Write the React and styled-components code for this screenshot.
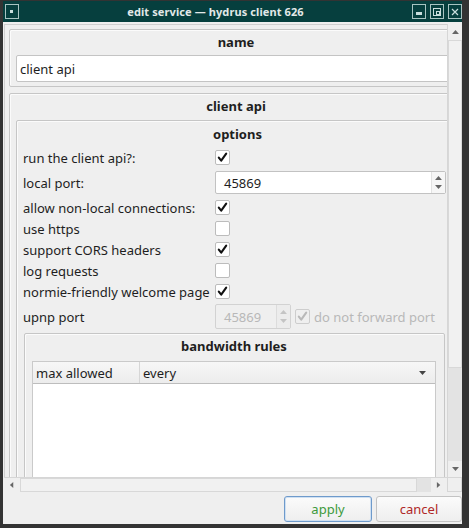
import React from "react";
import styled, { createGlobalStyle } from "styled-components";

const GlobalStyle = createGlobalStyle`
  html, body {
    margin: 0;
    padding: 0;
    background: #2e2e2e;
  }
  * {
    box-sizing: border-box;
  }
`;

const Frame = styled.div`
  width: 469px;
  height: 528px;
  background: #333333;
  padding: 1px 7px 4px 3px;
  display: flex;
  flex-direction: column;
  font-family: "Noto Sans", "DejaVu Sans", sans-serif;
  font-size: 13px;
  color: #1e1e1e;
`;

const TitleBar = styled.div`
  height: 21px;
  flex: none;
  background: #063f3e;
  display: flex;
  align-items: center;
  padding: 0 0 0 2px;
`;

const TitleText = styled.div`
  flex: 1;
  text-align: center;
  color: #e2e8e8;
  font-weight: 700;
  font-size: 11px;
  letter-spacing: 0.1px;
`;

const TitleButtons = styled.div`
  display: flex;
  gap: 4px;
`;

const WinButton = styled.div`
  width: 14px;
  height: 15px;
  border: 1px solid #a8c4c2;
  display: flex;
  align-items: center;
  justify-content: center;
`;

const Body = styled.div`
  flex: 1;
  background: #efefef;
  display: flex;
  flex-direction: column;
  padding: 2px 0 2px 1px;
  min-height: 0;
`;

const ScrollArea = styled.div`
  flex: 1;
  display: grid;
  grid-template-columns: 1fr 15px;
  grid-template-rows: 1fr 15px;
  min-height: 0;
`;

const Viewport = styled.div`
  overflow: hidden;
  border-top: 1px solid #cfcfcf;
  border-left: 1px solid #cfcfcf;
  padding: 4px 0 0 4px;
`;

const Content = styled.div`
  width: 454px;
  display: flex;
  flex-direction: column;
  gap: 6px;
`;

const Group = styled.div`
  border: 1px solid #c6c6c6;
  box-shadow: inset 1px 1px 0 #fbfbfb;
  border-radius: 2px;
  padding: ${(p) => p.$pad || "3px 6px 4px 6px"};
  display: flex;
  flex-direction: column;
  margin: ${(p) => p.$margin || "0"};
`;

const GroupTitle = styled.div`
  font-weight: 700;
  text-align: center;
  line-height: 18px;
  margin-bottom: ${(p) => p.$gap || 4}px;
`;

const TextInput = styled.div`
  height: 27px;
  background: #ffffff;
  border: 1px solid #c4c4c4;
  border-radius: 2px;
  display: flex;
  align-items: center;
  padding-left: 3px;
`;

const OptionsGrid = styled.div`
  display: grid;
  grid-template-columns: 192px 1fr;
  row-gap: 4px;
  padding-right: 6px;
`;

const Label = styled.div`
  height: ${(p) => (p.$tall ? 25 : 17)}px;
  display: flex;
  align-items: center;
  white-space: nowrap;
`;

const Control = styled.div`
  height: ${(p) => (p.$tall ? 25 : 17)}px;
  display: flex;
  align-items: center;
  gap: 4px;
`;

const Box = styled.div`
  width: 15px;
  height: 15px;
  flex: none;
  background: ${(p) => (p.$disabled ? "#efefef" : "#ffffff")};
  border: 1px solid ${(p) => (p.$disabled ? "#cdcdcd" : "#bcbcbc")};
  border-radius: 2px;
  display: flex;
  align-items: center;
  justify-content: center;
`;

const Spin = styled.div`
  height: ${(p) => p.$h || 23}px;
  width: ${(p) => p.$w || "100%"};
  flex: none;
  background: ${(p) => (p.$disabled ? "#efefef" : "#ffffff")};
  border: 1px solid ${(p) => (p.$disabled ? "#d2d2d2" : "#c2c2c2")};
  border-radius: 2px;
  display: flex;
  color: ${(p) => (p.$disabled ? "#b8b8b8" : "#1e1e1e")};
`;

const SpinValue = styled.div`
  flex: 1;
  display: flex;
  align-items: center;
  padding-left: 8px;
`;

const SpinArrows = styled.div`
  width: 14px;
  border-left: 1px solid ${(p) => (p.$disabled ? "#dcdcdc" : "#e2e2e2")};
  background: ${(p) => (p.$disabled ? "#ececec" : "#f6f6f6")};
  display: flex;
  flex-direction: column;
  align-items: center;
  justify-content: center;
  gap: 3px;
`;

const DisabledText = styled.span`
  color: #b8b8b8;
  white-space: nowrap;
`;

const List = styled.div`
  flex: 1;
  background: #ffffff;
  border: 1px solid #cacaca;
  border-bottom: none;
  min-height: 140px;
`;

const ListHeader = styled.div`
  height: 22px;
  display: flex;
  background: linear-gradient(#f7f7f7, #ececec);
  border-bottom: 1px solid #bdbdbd;
`;

const HeaderCell = styled.div`
  width: ${(p) => p.$w || "auto"};
  flex: ${(p) => (p.$w ? "none" : 1)};
  display: flex;
  align-items: center;
  justify-content: space-between;
  padding: 0 9px 0 3px;
  border-right: ${(p) => (p.$w ? "1px solid #d6d6d6" : "none")};
`;

const VScroll = styled.div`
  display: flex;
  flex-direction: column;
  border-left: 1px solid #d6d6d6;
  background: #e3e3e3;
`;

const HScroll = styled.div`
  display: flex;
  border-top: 1px solid #d6d6d6;
  background: #e3e3e3;
`;

const Arrow = styled.div`
  flex: none;
  width: ${(p) => (p.$horizontal ? "16px" : "auto")};
  height: ${(p) => (p.$horizontal ? "auto" : "16px")};
  background: #efefef;
  display: flex;
  align-items: center;
  justify-content: center;
`;

const Handle = styled.div`
  flex: ${(p) => p.$size} 0 0;
  background: #f1f1f1;
  border: 1px solid #d8d8d8;
`;

const Trough = styled.div`
  flex: ${(p) => p.$size} 0 0;
`;

const Corner = styled.div`
  background: #efefef;
  border: 1px solid #d6d6d6;
`;

const ButtonRow = styled.div`
  flex: none;
  display: flex;
  justify-content: flex-end;
  gap: 4px;
  margin-top: 4px;
`;

const DialogButton = styled.button`
  width: ${(p) => p.$w}px;
  height: 26px;
  font-family: "Noto Sans", "DejaVu Sans", sans-serif;
  font-size: 13px;
  color: ${(p) => p.$color};
  background: linear-gradient(#fbfbfb, #eeeeee);
  border: 1px solid ${(p) => (p.$focused ? "#6e9acb" : "#c3c3c3")};
  box-shadow: ${(p) => (p.$focused ? "inset 0 0 0 1px #cfe0f2" : "none")};
  border-radius: 3px;
  padding: 0;
`;

const Check = ({ color = "#111" }) => (
  <svg width="13" height="13" viewBox="0 0 13 13">
    <path
      d="M2.8 6.6 L5.2 9.6 L10.2 2.6"
      fill="none"
      stroke={color}
      strokeWidth="2.1"
      strokeLinecap="round"
      strokeLinejoin="round"
    />
  </svg>
);

const Tri = ({ dir = "up", color = "#555", size = 7 }) => {
  const pts = {
    up: "0,5 3.5,1 7,5",
    down: "0,1 3.5,5 7,1",
    left: "5,0 1,3.5 5,7",
    right: "1,0 5,3.5 1,7",
  }[dir];
  return (
    <svg width={size} height={size * 0.85} viewBox="0 0 7 6" style={{ overflow: "visible" }}>
      <polygon points={pts} fill={color} />
    </svg>
  );
};

const CheckBox = ({ checked, disabled }) => (
  <Box $disabled={disabled}>
    {checked && <Check color={disabled ? "#b9b9b9" : "#111"} />}
  </Box>
);

const SpinBox = ({ value, disabled, w, h }) => (
  <Spin $disabled={disabled} $w={w} $h={h}>
    <SpinValue>{value}</SpinValue>
    <SpinArrows $disabled={disabled}>
      <Tri dir="up" color={disabled ? "#c4c4c4" : "#666"} size={7} />
      <Tri dir="down" color={disabled ? "#c4c4c4" : "#666"} size={7} />
    </SpinArrows>
  </Spin>
);

const options = [
  { label: "run the client api?:", checked: true },
  { label: "local port:", spin: "45869" },
  { label: "allow non-local connections:", checked: true },
  { label: "use https", checked: false },
  { label: "support CORS headers", checked: true },
  { label: "log requests", checked: false },
  { label: "normie-friendly welcome page", checked: true },
  { label: "upnp port", upnp: true },
];

export default function App() {
  return (
    <>
      <GlobalStyle />
      <Frame>
        <TitleBar>
          <WinButton>
            <svg width="4" height="4">
              <rect width="3" height="3" fill="#c9dedd" />
            </svg>
          </WinButton>
          <TitleText>edit service — hydrus client 626</TitleText>
          <TitleButtons>
            <WinButton>
              <svg width="10" height="10">
                <rect x="2" y="5" width="6" height="3" fill="#c9dedd" />
              </svg>
            </WinButton>
            <WinButton>
              <svg width="10" height="10">
                <rect x="1.5" y="1.5" width="7" height="7" fill="none" stroke="#c9dedd" />
                <rect x="4.5" y="4.5" width="3" height="3" fill="none" stroke="#c9dedd" />
              </svg>
            </WinButton>
            <WinButton>
              <svg width="10" height="10">
                <path d="M2 2 L8 8 M8 2 L2 8" stroke="#c9dedd" strokeWidth="1.2" />
              </svg>
            </WinButton>
          </TitleButtons>
        </TitleBar>
        <Body>
          <ScrollArea>
            <Viewport>
              <Content>
                <Group>
                  <GroupTitle>name</GroupTitle>
                  <TextInput>client api</TextInput>
                </Group>
                <Group $pad="3px 6px 0 6px">
                  <GroupTitle $gap={5}>client api</GroupTitle>
                  <Group $pad="4px 3px 0 6px">
                    <GroupTitle $gap={6}>options</GroupTitle>
                    <OptionsGrid>
                      {options.map((o) => (
                        <React.Fragment key={o.label}>
                          <Label $tall={o.spin || o.upnp}>{o.label}</Label>
                          <Control $tall={o.spin || o.upnp}>
                            {o.spin && <SpinBox value={o.spin} />}
                            {o.upnp && (
                              <>
                                <SpinBox value="45869" disabled w="76px" h={25} />
                                <CheckBox checked disabled />
                                <DisabledText>do not forward port</DisabledText>
                              </>
                            )}
                            {!o.spin && !o.upnp && <CheckBox checked={o.checked} />}
                          </Control>
                        </React.Fragment>
                      ))}
                    </OptionsGrid>
                    <Group $pad="3px 8px 0 7px" $margin="4px 7px 0 1px">
                      <GroupTitle $gap={6}>bandwidth rules</GroupTitle>
                      <List>
                        <ListHeader>
                          <HeaderCell $w="107px">max allowed</HeaderCell>
                          <HeaderCell>
                            every
                            <Tri dir="down" color="#444" size={7} />
                          </HeaderCell>
                        </ListHeader>
                      </List>
                    </Group>
                  </Group>
                </Group>
              </Content>
            </Viewport>
            <VScroll>
              <Arrow>
                <Tri dir="up" color="#666" size={7} />
              </Arrow>
              <Handle $size={327} />
              <Trough $size={93} />
              <Arrow>
                <Tri dir="down" color="#666" size={7} />
              </Arrow>
            </VScroll>
            <HScroll>
              <Arrow $horizontal>
                <Tri dir="left" color="#666" size={6} />
              </Arrow>
              <Handle $size={394} />
              <Trough $size={14} />
              <Arrow $horizontal>
                <Tri dir="right" color="#666" size={6} />
              </Arrow>
            </HScroll>
            <Corner />
          </ScrollArea>
          <ButtonRow>
            <DialogButton $w={88} $color="#3c9a3c" $focused>
              apply
            </DialogButton>
            <DialogButton $w={86} $color="#b02828">
              cancel
            </DialogButton>
          </ButtonRow>
        </Body>
      </Frame>
    </>
  );
}
